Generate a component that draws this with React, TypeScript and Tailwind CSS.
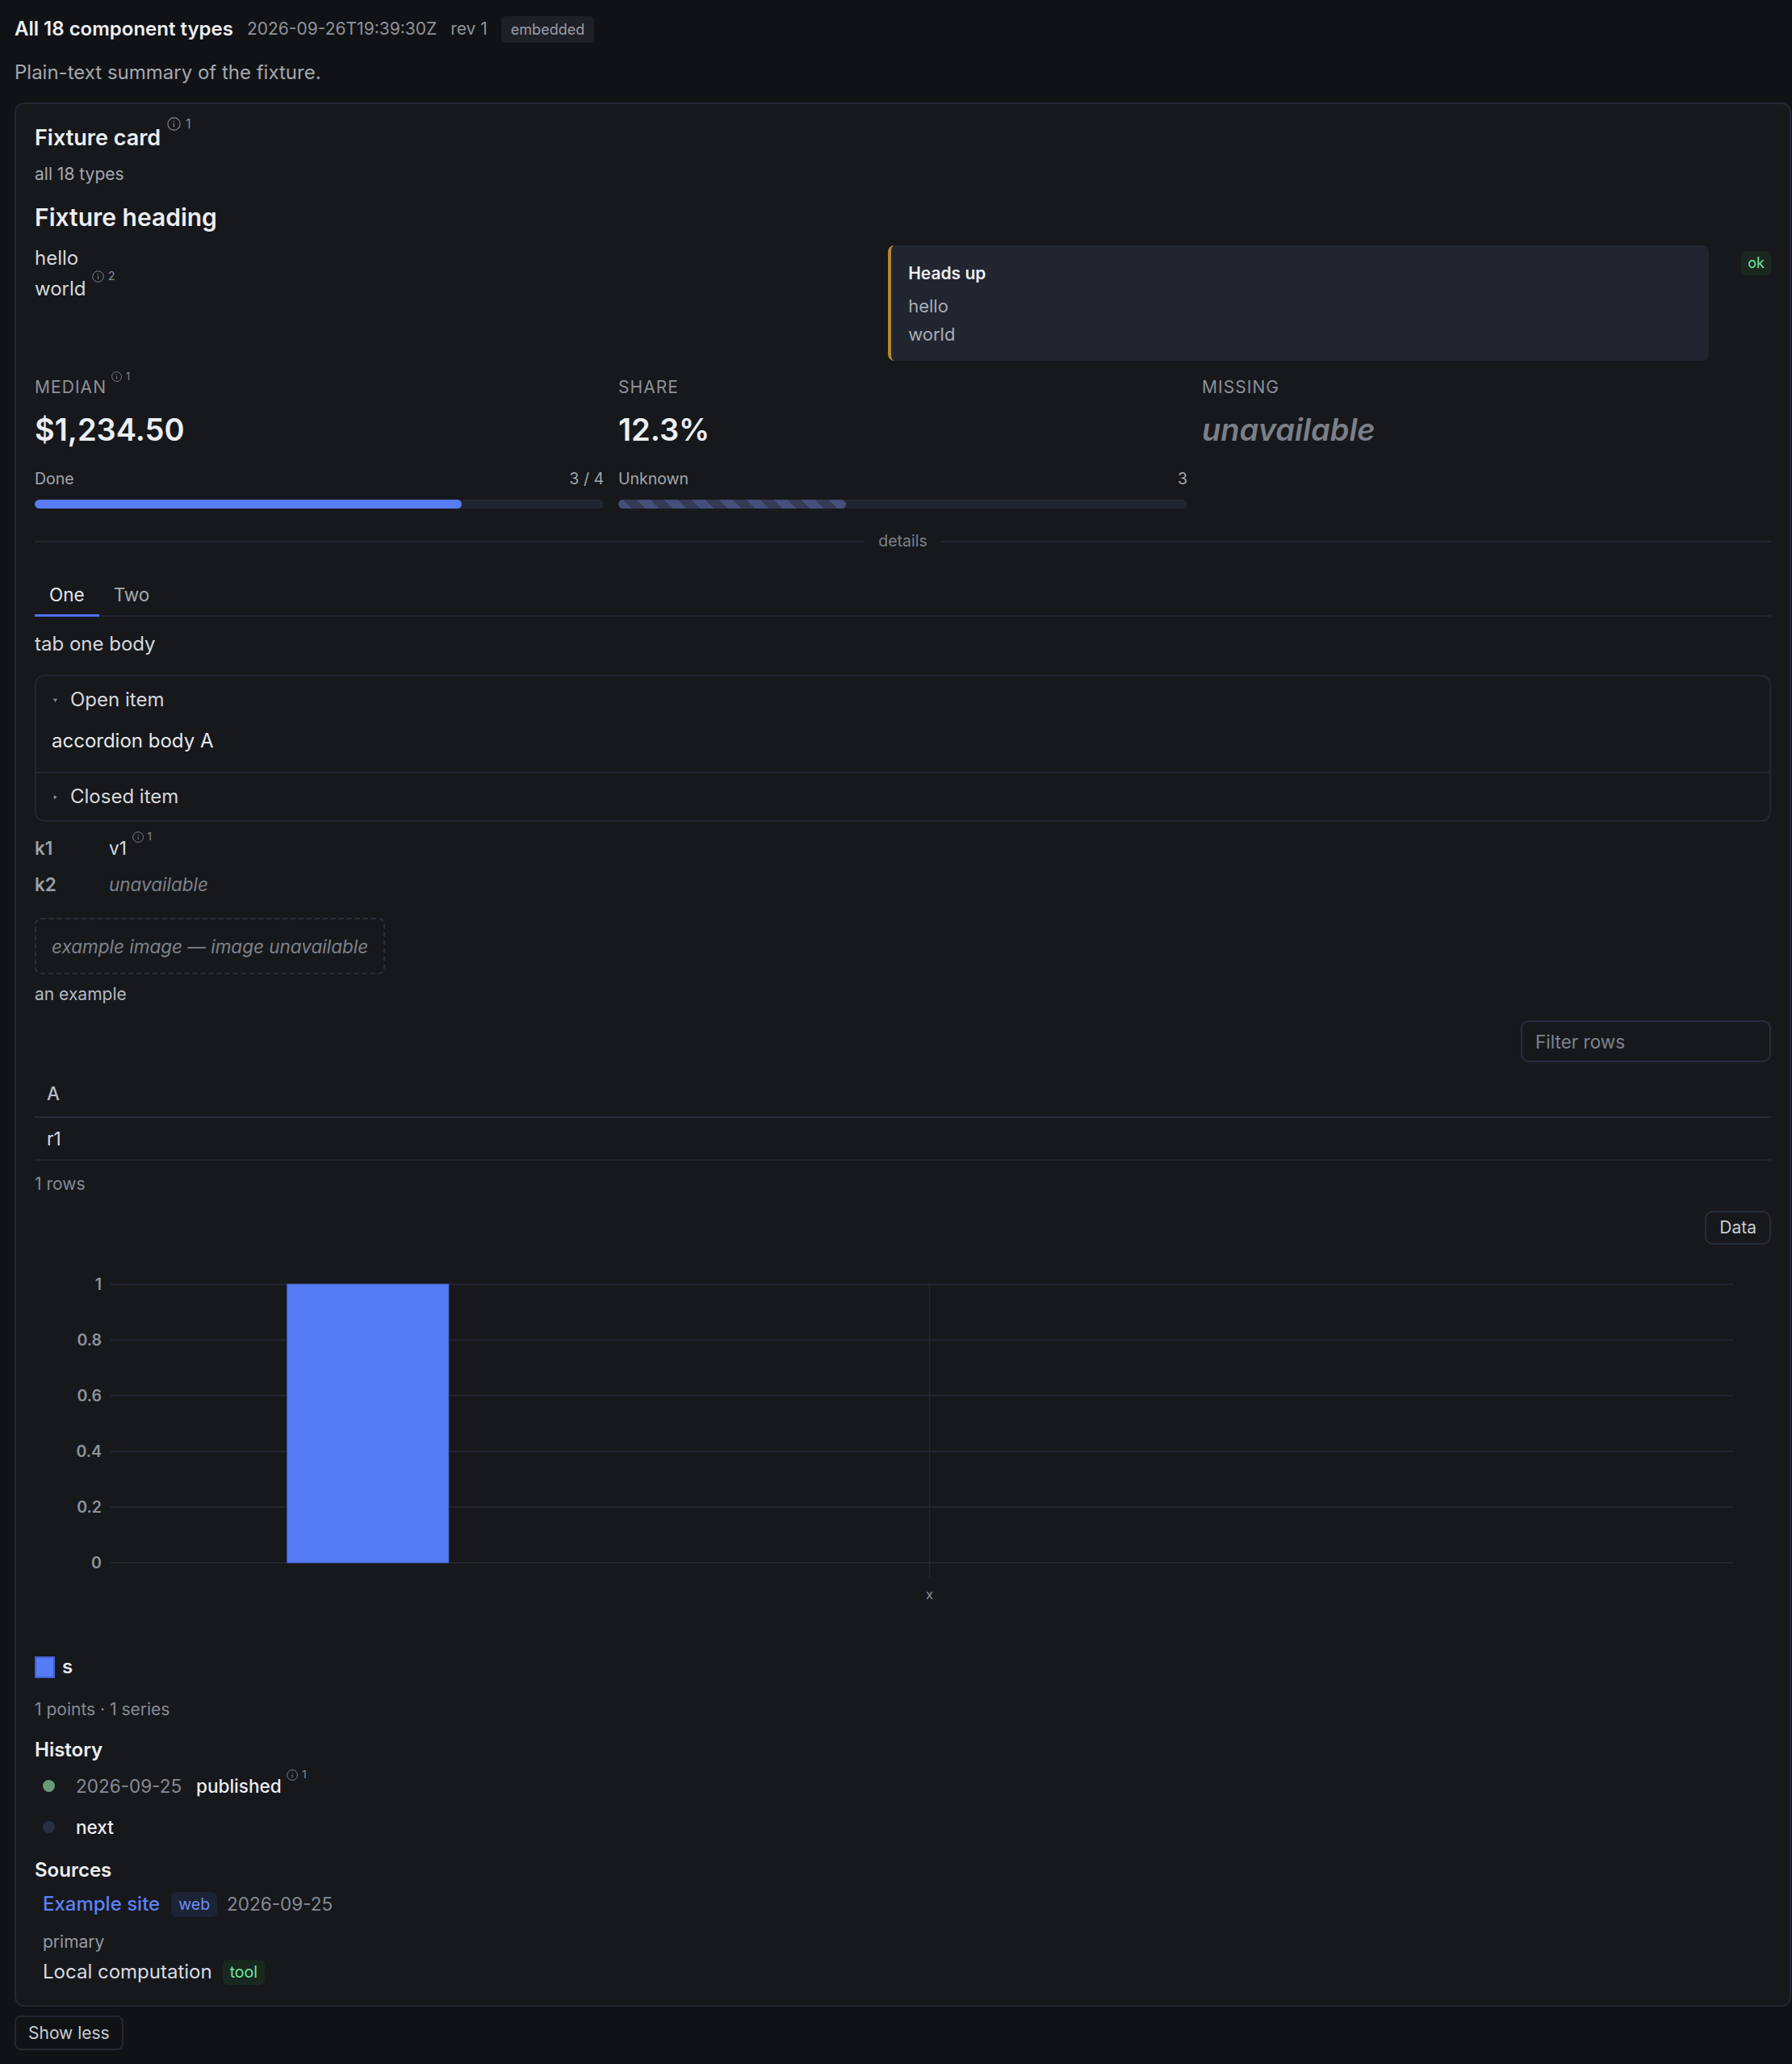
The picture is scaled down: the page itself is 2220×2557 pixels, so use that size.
import React from 'react';

const Note = ({ n }: { n: number }) => (
  <span className="relative -top-[1.3em] ml-[0.5em] text-[0.6em] font-normal leading-none text-[#858a93]">
    <svg viewBox="0 0 16 16" fill="none" className="inline-block h-[1.05em] w-[1.05em] align-[-0.17em]">
      <circle cx="8" cy="8" r="7.2" stroke="currentColor" strokeWidth="1" />
      <path d="M8 7v4.6" stroke="currentColor" strokeWidth="1.1" />
      <circle cx="8" cy="4.9" r="0.7" fill="currentColor" />
    </svg>
    <span className="ml-[0.35em]">{n}</span>
  </span>
);

const Metric = ({ label, value, note, missing }: { label: string; value: string; note?: number; missing?: boolean }) => (
  <div>
    <div className="text-[21px] leading-[30px] uppercase tracking-[0.05em] text-[#8d9199]">
      {label}
      {note && <Note n={note} />}
    </div>
    <div
      className={`mt-[13px] text-[38px] leading-[48px] font-semibold ${missing ? 'italic text-[#7b7f87]' : 'text-[#eceef1]'}`}
    >
      {value}
    </div>
  </div>
);

const Progress = ({ label, count, striped }: { label: string; count: string; striped?: boolean }) => (
  <div>
    <div className="flex justify-between text-[19.5px] leading-[27px] text-[#a3a7ae]">
      <span>{label}</span>
      <span>{count}</span>
    </div>
    <div className="mt-[12px] h-[11px] overflow-hidden rounded-full bg-[#212530]">
      {striped ? (
        <div className="h-full w-[40%] rounded-full bg-[repeating-linear-gradient(45deg,#44507a_0_12px,#343b56_12px_24px)]" />
      ) : (
        <div className="h-full w-[75%] rounded-full bg-[#587cf5]" />
      )}
    </div>
  </div>
);

const Marker = ({ open }: { open: boolean }) => (
  <svg viewBox="0 0 8 8" className="h-[7px] w-[7px] text-[#8d9199]" fill="currentColor">
    {open ? <path d="M1 2h6L4 6.5z" /> : <path d="M2 1v6l4.5-3z" />}
  </svg>
);

const ticks = [
  { y: 41, t: '1' },
  { y: 110, t: '0.8' },
  { y: 179, t: '0.6' },
  { y: 248, t: '0.4' },
  { y: 317, t: '0.2' },
  { y: 386, t: '0' },
];

const Chart = () => (
  <svg viewBox="0 0 2152 450" className="mt-[8px] block h-[450px] w-full" fontFamily="Inter, sans-serif">
    {ticks.map((tk) => (
      <g key={tk.t}>
        <line x1="94" x2="2105" y1={tk.y} y2={tk.y} stroke="#22252f" strokeWidth="2" />
        <text x="83" y={tk.y + 7} textAnchor="end" fontSize="19.5" fontWeight="600" fill="#8e939b">
          {tk.t}
        </text>
      </g>
    ))}
    <line x1="1109" x2="1109" y1="40" y2="405" stroke="#22262f" strokeWidth="1.5" />
    <rect x="313" y="41" width="200" height="345" fill="#557cf5" stroke="#4a6fe0" strokeWidth="1" />
    <text x="1109" y="431" textAnchor="middle" fontSize="16.5" fill="#8e939b">
      x
    </text>
  </svg>
);

export default function App() {
  return (
    <div className="min-h-screen bg-[#111216] pl-[18px] pr-[1px] pt-[18px] pb-[16px] font-['Inter',sans-serif] text-[#e5e7eb]">
      <div className="flex h-[36px] items-center gap-[17px]">
        <h1 className="text-[24px] leading-[36px] font-semibold text-[#eceef1]">All 18 component types</h1>
        <span className="text-[21px] text-[#8f939b]">2026-09-26T19:39:30Z</span>
        <span className="text-[21px] text-[#8f939b]">rev 1</span>
        <span className="rounded-[6px] bg-[#1e2026] px-3 text-[18px] leading-[33px] text-[#9a9ea6]">embedded</span>
      </div>
      <p className="mt-[18px] text-[24px] leading-[36px] text-[#a3a7ae]">Plain-text summary of the fixture.</p>

      <div className="mt-[19px] rounded-[12px] border-2 border-[#232733] bg-[#17181c] px-[23px] pt-[24px] pb-[23px]">
        <h2 className="text-[27px] leading-[36px] font-semibold text-[#eceef1]">
          Fixture card
          <Note n={1} />
        </h2>
        <p className="mt-3 text-[21px] leading-[30px] text-[#a3a7ae]">all 18 types</p>
        <h3 className="mt-[18px] text-[30px] leading-[40px] font-semibold text-[#eceef1]">Fixture heading</h3>

        <div className="mt-[12px] grid grid-cols-[1fr_1fr_auto] items-start gap-x-[40px]">
          <div className="text-[24px] leading-[38px] text-[#d4d7dc]">
            <div>hello</div>
            <div>
              world
              <Note n={2} />
            </div>
          </div>
          <div className="mt-[3px] rounded-[8px] border-l-4 border-[#b5852f] bg-[#212530] pl-[21px] pr-6 pt-[20px] pb-[15px]">
            <div className="text-[21px] leading-[30px] font-semibold text-[#eceef1]">Heads up</div>
            <p className="mt-2 text-[22px] leading-[35px] text-[#a9adb4]">hello</p>
            <p className="text-[22px] leading-[35px] text-[#a9adb4]">world</p>
          </div>
          <span className="mt-[10px] rounded-[6px] bg-[#19271f] px-[8px] text-[18px] leading-[30px] text-[#6ee7a5]">ok</span>
        </div>

        <div className="mt-[18px] grid grid-cols-3 gap-x-[18px] gap-y-[24px]">
          <Metric label="Median" value="$1,234.50" note={1} />
          <Metric label="Share" value="12.3%" />
          <Metric label="Missing" value="unavailable" missing />
          <Progress label="Done" count="3 / 4" />
          <Progress label="Unknown" count="3" striped />
        </div>

        <div className="mt-[27px] flex items-center gap-[17px]">
          <div className="h-[2px] flex-1 bg-[#232836]" />
          <span className="text-[19.5px] leading-[27px] text-[#7d828b]">details</span>
          <div className="h-[2px] flex-1 bg-[#232836]" />
        </div>

        <div className="mt-[28px] flex border-b-2 border-[#20242e]">
          <button className="-mb-[2px] border-b-[3px] border-[#4f70f0] px-[18px] pt-[10px] pb-[9px] text-[22.5px] leading-[30px] text-[#e5e7eb]">
            One
          </button>
          <button className="-mb-[2px] border-b-[3px] border-transparent px-[18px] pt-[10px] pb-[9px] text-[22.5px] leading-[30px] text-[#a6aab2]">
            Two
          </button>
        </div>
        <p className="mt-[16px] text-[24px] leading-[36px] text-[#d4d7dc]">tab one body</p>

        <div className="mt-[20px] rounded-[12px] border-2 border-[#232733]">
          <div className="flex items-center py-[11px] pl-[20px] text-[24px] leading-[36px] text-[#d4d7dc]">
            <Marker open />
            <span className="ml-[15px]">Open item</span>
          </div>
          <div className="pl-[19px] pt-[4px] pb-[20px] text-[24px] leading-[36px] text-[#e5e7eb]">accordion body A</div>
          <div className="flex items-center border-t-2 border-[#232733] py-[11px] pl-[20px] text-[24px] leading-[36px] text-[#d4d7dc]">
            <Marker open={false} />
            <span className="ml-[15px]">Closed item</span>
          </div>
        </div>

        <div className="mt-[10px] grid grid-cols-[92px_1fr] text-[22.5px] leading-[33px]">
          <div className="py-[6px] font-semibold text-[#9ca0a8]">k1</div>
          <div className="py-[6px] text-[#d8dbe0]">
            v1
            <Note n={1} />
          </div>
          <div className="py-[6px] font-semibold text-[#9ca0a8]">k2</div>
          <div className="py-[6px] italic text-[#7d828b]">unavailable</div>
        </div>

        <div className="mt-[19px] w-fit rounded-[8px] border-2 border-dashed border-[#2a2f3b] px-[19px] py-[16.5px] text-[22.5px] leading-[33px] italic text-[#7d828b]">
          example image — image unavailable
        </div>
        <p className="mt-[10px] text-[21px] leading-[30px] text-[#b5b9c0]">an example</p>

        <div className="mt-[17px] flex justify-end">
          <input
            placeholder="Filter rows"
            className="h-[52px] w-[310px] rounded-[10px] border-2 border-[#272d3d] bg-transparent px-[16px] text-[22.5px] text-[#d8dbe0] outline-none placeholder:text-[#7d828b]"
          />
        </div>

        <div className="mt-[10px]">
          <div className="border-b-2 border-[#262b38] px-[15px] py-[12px] text-[22.5px] leading-[33px] font-medium text-[#b8bcc4]">A</div>
          <div className="border-b-2 border-[#20242d] px-[15px] py-[9px] text-[22.5px] leading-[33px] text-[#d8dbe0]">r1</div>
        </div>
        <p className="mt-[14px] text-[21px] leading-[30px] text-[#868b94]">1 rows</p>

        <div className="mt-[18px] flex justify-end">
          <button className="rounded-[10px] border-2 border-[#262c3b] px-[16px] py-[4px] text-[21px] leading-[30px] text-[#c8ccd2]">
            Data
          </button>
        </div>

        <Chart />

        <div className="mt-[47px] flex items-center gap-[9px] text-[24px] leading-[36px] font-semibold text-[#e5e7eb]">
          <span className="h-[27px] w-[25px] border-2 border-[#3e5fd0] bg-[#567cf5]" />
          <span>s</span>
        </div>
        <p className="mt-[20px] text-[21px] leading-[30px] text-[#868b94]">1 points · 1 series</p>

        <h4 className="mt-[17px] text-[24px] leading-[36px] font-semibold text-[#eceef1]">History</h4>
        <div className="mt-[10px] flex flex-col gap-[18px] pl-[10px] text-[22.5px] leading-[33px]">
          <div className="flex items-center">
            <span className="mr-[26px] h-[15px] w-[15px] rounded-full bg-[#6a9b78]" />
            <span className="mr-[18px] text-[#868b94]">2026-09-25</span>
            <span className="font-medium text-[#eceef1]">
              published
              <Note n={1} />
            </span>
          </div>
          <div className="flex items-center">
            <span className="mr-[26px] h-[15px] w-[15px] rounded-full bg-[#283047]" />
            <span className="font-medium text-[#eceef1]">next</span>
          </div>
        </div>

        <h4 className="mt-[19px] text-[24px] leading-[36px] font-semibold text-[#eceef1]">Sources</h4>
        <div className="mt-[6px] pl-[10px]">
          <div className="flex items-center text-[24px] leading-[36px]">
            <a className="font-medium text-[#5a82f6]">Example site</a>
            <span className="ml-[14px] rounded-[6px] bg-[#1c2337] px-[9px] text-[19.5px] leading-[31px] text-[#6f8ff8]">web</span>
            <span className="ml-[12px] text-[22.5px] text-[#868b94]">2026-09-25</span>
          </div>
          <p className="mt-[14px] text-[21px] leading-[30px] text-[#959aa2]">primary</p>
          <div className="mt-[4px] flex items-center text-[24px] leading-[36px]">
            <span className="text-[#d8dbe0]">Local computation</span>
            <span className="ml-[13px] rounded-[6px] bg-[#18281f] px-[9px] text-[19.5px] leading-[31px] text-[#6ee7a0]">tool</span>
          </div>
        </div>
      </div>

      <button className="mt-[11px] rounded-[8px] border-2 border-[#232733] px-[15px] py-[4.5px] text-[21px] leading-[30px] text-[#c8ccd2]">
        Show less
      </button>
    </div>
  );
}
